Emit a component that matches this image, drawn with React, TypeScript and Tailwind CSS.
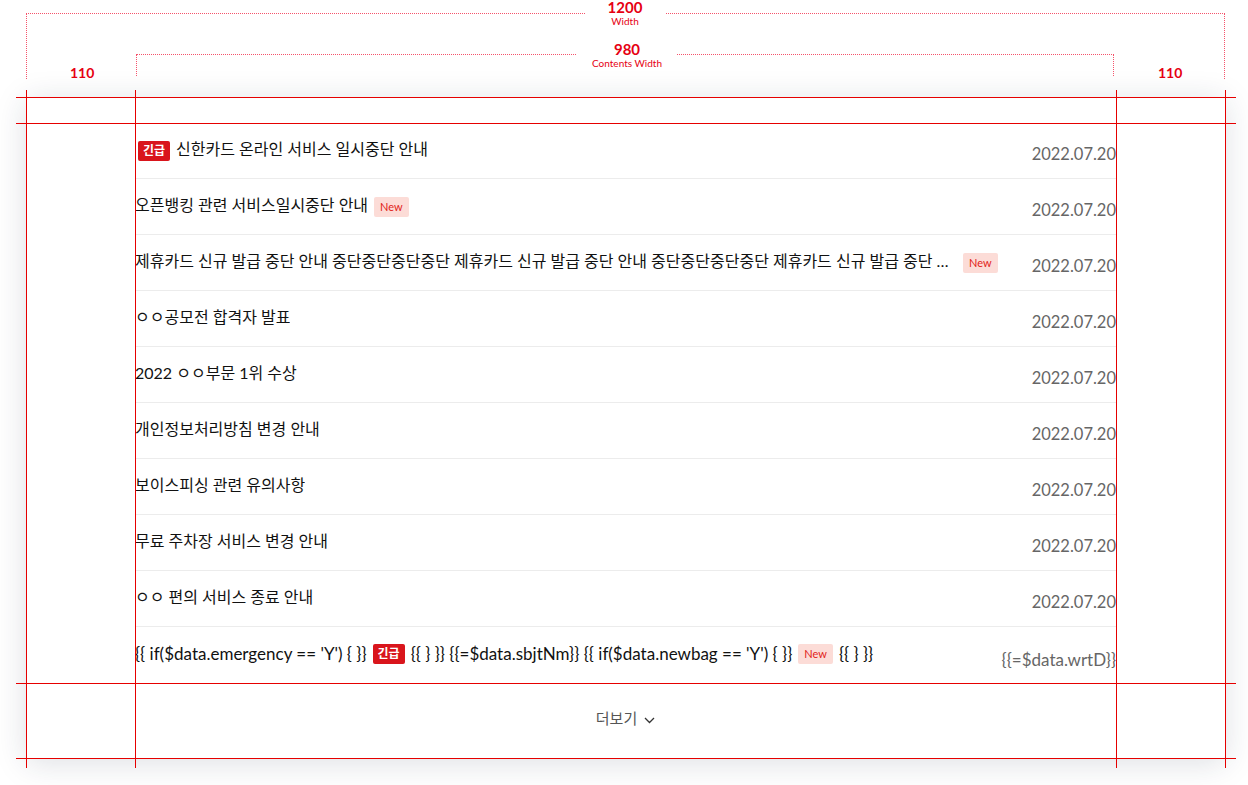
import React from 'react';

type Notice = {
  title: string;
  date: string;
  urgent?: boolean;
  isNew?: boolean;
};

const notices: Notice[] = [
  { title: '신한카드 온라인 서비스 일시중단 안내', date: '2022.07.20', urgent: true },
  { title: '오픈뱅킹 관련 서비스일시중단 안내', date: '2022.07.20', isNew: true },
  {
    title:
      '제휴카드 신규 발급 중단 안내 중단중단중단중단 제휴카드 신규 발급 중단 안내 중단중단중단중단 제휴카드 신규 발급 중단 안내 중단중단중단중단',
    date: '2022.07.20',
    isNew: true,
  },
  { title: 'ㅇㅇ공모전 합격자 발표', date: '2022.07.20' },
  { title: '2022 ㅇㅇ부문 1위 수상', date: '2022.07.20' },
  { title: '개인정보처리방침 변경 안내', date: '2022.07.20' },
  { title: '보이스피싱 관련 유의사항', date: '2022.07.20' },
  { title: '무료 주차장 서비스 변경 안내', date: '2022.07.20' },
  { title: 'ㅇㅇ 편의 서비스 종료 안내', date: '2022.07.20' },
];

const UrgentBadge = () => (
  <span className="inline-flex items-center justify-center h-[20px] px-[5px] rounded-[2px] bg-[#d9151c] text-white text-[12px] font-bold leading-none">
    긴급
  </span>
);

const NewBadge = () => (
  <span className="inline-flex items-center justify-center h-[20px] px-[6px] rounded-[2px] bg-[#fcdcd7] text-[#e2231a] text-[11px] leading-none">
    New
  </span>
);

const App: React.FC = () => {
  return (
    <div className="relative min-h-screen bg-white font-['Lato','Noto_Sans_CJK_KR',sans-serif] overflow-hidden">
      {/* size annotations */}
      <div className="relative h-[97px]">
        <div className="absolute left-[26px] top-[13px] w-[1199px] h-[66px] border-t border-x border-dotted border-[#f5536b]" />
        <div className="absolute left-[585px] top-0 w-[80px] bg-white flex flex-col items-center text-[#e60012]">
          <span className="text-[15px] font-bold leading-[15px]">1200</span>
          <span className="text-[10px] leading-[12px]">Width</span>
        </div>
        <div className="absolute left-[136px] top-[54px] w-[978px] h-[22px] border-t border-x border-dotted border-[#f5536b]" />
        <div className="absolute left-[577px] top-[42px] w-[100px] bg-white flex flex-col items-center text-[#e60012]">
          <span className="text-[15px] font-bold leading-[15px]">980</span>
          <span className="text-[10px] leading-[13px]">Contents Width</span>
        </div>
        <span className="absolute left-[70px] top-[62px] text-[14px] font-bold text-[#e60012]">110</span>
        <span className="absolute left-[1158px] top-[62px] text-[14px] font-bold text-[#e60012]">110</span>
      </div>

      {/* notice panel */}
      <div className="ml-[26px] w-[1199px] bg-white shadow-[0_4px_30px_rgba(30,40,70,0.15)]">
        <div className="h-[26px]" />
        <ul className="px-[109px]">
          {notices.map((n, i) => (
            <li key={i} className="flex items-center h-[56px] border-b border-[#ececec]">
              <div className="flex-1 min-w-0 flex items-center pr-[34px] mb-[3px]">
                {n.urgent && (
                  <span className="shrink-0 mr-[6px] ml-[3px]">
                    <UrgentBadge />
                  </span>
                )}
                <span className="truncate text-[16px] text-[#111]">{n.title}</span>
                {n.isNew && (
                  <span className="shrink-0 ml-[6px]">
                    <NewBadge />
                  </span>
                )}
              </div>
              <span className="shrink-0 mt-[8px] text-[16.5px] text-[#666]">{n.date}</span>
            </li>
          ))}
          <li className="flex items-center h-[57px]">
            <div className="flex-1 min-w-0 flex items-center gap-[6px] pr-[34px] mb-[4px] text-[17px] text-[#111] whitespace-nowrap">
              <span>{"{{ if($data.emergency == 'Y') { }}"}</span>
              <UrgentBadge />
              <span>{'{{ } }} {{=$data.sbjtNm}} {{ if($data.newbag == \'Y\') { }}'}</span>
              <NewBadge />
              <span>{'{{ } }}'}</span>
            </div>
            <span className="shrink-0 mt-[9px] text-[17px] text-[#666]">{'{{=$data.wrtD}}'}</span>
          </li>
        </ul>
        <div className="h-[75px] flex items-center justify-center pb-[6px]">
          <button className="flex items-center gap-[7px] text-[15px] text-[#555]">
            더보기
            <svg width="11" height="7" viewBox="0 0 11 7" fill="none" className="mt-[3px]">
              <path d="M1 1l4.5 4.5L10 1" stroke="#333" strokeWidth="1.3" />
            </svg>
          </button>
        </div>
      </div>

      {/* guide lines */}
      <div className="absolute left-[16px] top-[97px] w-[1220px] h-px bg-[#e60000]" />
      <div className="absolute left-[16px] top-[123px] w-[1220px] h-px bg-[#e60000]" />
      <div className="absolute left-[16px] top-[683px] w-[1220px] h-px bg-[#e60000]" />
      <div className="absolute left-[16px] top-[758px] w-[1220px] h-px bg-[#e60000]" />
      <div className="absolute left-[26px] top-[90px] w-px h-[678px] bg-[#e60000]" />
      <div className="absolute left-[135px] top-[90px] w-px h-[678px] bg-[#e60000]" />
      <div className="absolute left-[1116px] top-[90px] w-px h-[678px] bg-[#e60000]" />
      <div className="absolute left-[1225px] top-[90px] w-px h-[678px] bg-[#e60000]" />
    </div>
  );
};

export default App;
